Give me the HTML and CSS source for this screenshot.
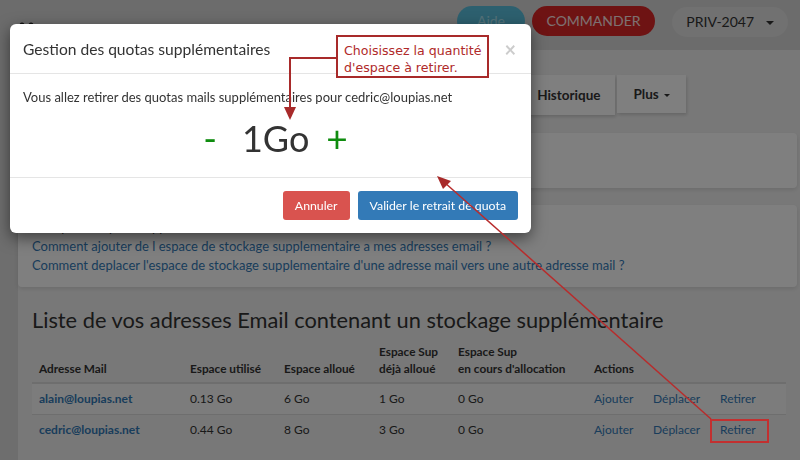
FILE: index.html
```html
<!DOCTYPE html>
<html lang="fr">
<head>
    <meta charset="UTF-8">
    <meta name="viewport" content="width=device-width, initial-scale=1.0">
    <title>Gestion des quotas supplémentaires</title>
    <link rel="stylesheet" href="styles.css">
</head>
<body>
    <header class="topbar">
        <svg class="logo" width="16" height="14" viewBox="0 0 16 14">
            <circle cx="3" cy="4" r="2.5" fill="#222"/>
            <circle cx="12" cy="4" r="2.5" fill="#222"/>
            <rect x="1" y="8" width="14" height="5" fill="#222"/>
        </svg>
        <div class="top-actions">
            <a class="pill pill-help" href="#">Aide</a>
            <a class="pill pill-order" href="#">COMMANDER</a>
            <a class="pill pill-account" href="#">PRIV-2047 <span class="caret"></span></a>
        </div>
    </header>

    <div class="layout">
        <aside class="side"></aside>
        <main class="content">
            <nav class="tabs">
                <a class="tab tab-active" href="#">Historique</a>
                <a class="tab" href="#">Plus <span class="caret small"></span></a>
            </nav>

            <section class="panel panel-info"></section>

            <section class="panel panel-help">
                <p class="help-title">Aide pour l'espace supplementaire :</p>
                <a href="#">Comment ajouter de l espace de stockage supplementaire a mes adresses email ?</a><br>
                <a href="#">Comment deplacer l'espace de stockage supplementaire d'une adresse mail vers une autre adresse mail ?</a>
            </section>

            <div class="list">
                <h2 class="list-title">Liste de vos adresses Email contenant un stockage supplémentaire</h2>
                <table class="quota-table">
                    <colgroup>
                        <col style="width:151px">
                        <col style="width:94px">
                        <col style="width:95px">
                        <col style="width:79px">
                        <col style="width:136px">
                        <col style="width:59px">
                        <col style="width:67px">
                        <col>
                    </colgroup>
                    <thead>
                        <tr>
                            <th>Adresse Mail</th>
                            <th>Espace utilisé</th>
                            <th>Espace alloué</th>
                            <th>Espace Sup<br>déjà alloué</th>
                            <th>Espace Sup<br>en cours d'allocation</th>
                            <th colspan="3">Actions</th>
                        </tr>
                    </thead>
                    <tbody>
                        <tr>
                            <td><a class="mail" href="#">alain@loupias.net</a></td>
                            <td>0.13 Go</td>
                            <td>6 Go</td>
                            <td>1 Go</td>
                            <td>0 Go</td>
                            <td><a href="#">Ajouter</a></td>
                            <td><a href="#">Déplacer</a></td>
                            <td><a href="#">Retirer</a></td>
                        </tr>
                        <tr>
                            <td><a class="mail" href="#">cedric@loupias.net</a></td>
                            <td>0.44 Go</td>
                            <td>8 Go</td>
                            <td>3 Go</td>
                            <td>0 Go</td>
                            <td><a href="#">Ajouter</a></td>
                            <td><a href="#">Déplacer</a></td>
                            <td><a href="#">Retirer</a></td>
                        </tr>
                    </tbody>
                </table>
            </div>
        </main>
    </div>

    <div class="backdrop"></div>

    <div class="modal">
        <div class="modal-header">
            <h4 class="modal-title">Gestion des quotas supplémentaires</h4>
            <span class="close">&times;</span>
        </div>
        <div class="modal-body">
            <p>Vous allez retirer des quotas mails supplémentaires pour cedric@loupias.net</p>
            <div class="qty-row">
                <a class="qty-btn minus" href="#">-</a>
                <span class="qty">1Go</span>
                <a class="qty-btn plus" href="#">+</a>
            </div>
        </div>
        <div class="modal-footer">
            <button class="btn btn-danger">Annuler</button>
            <button class="btn btn-primary">Valider le retrait de quota</button>
        </div>
    </div>

    <!-- annotations -->
    <div class="callout">Choisissez la quantité<br>d'espace à retirer.</div>
    <div class="mark"></div>
    <svg class="arrows" width="800" height="460" viewBox="0 0 800 460">
        <polyline points="336,58 290,58 290,110" fill="none" stroke="#a82a2a" stroke-width="2"/>
        <polygon points="284,107 296,107 290,120" fill="#a82a2a"/>
        <line x1="711" y1="419" x2="444" y2="182" stroke="#b82c2c" stroke-width="1.5"/>
        <polygon points="437,176 451,181 443,189" fill="#a82a2a"/>
    </svg>
</body>
</html>
```

FILE: styles.css
```css
body {
    margin: 0;
    font-family: Lato, "Open Sans", sans-serif;
    font-size: 13px;
    color: #333;
    background: #f1f1f1;
    width: 800px;
    height: 460px;
    overflow: hidden;
}
a {
    color: #337ab7;
    text-decoration: none;
}

/* top bar */
.topbar {
    height: 50px;
    background: #d8d8d8;
    display: flex;
    justify-content: space-between;
    padding: 6px 12px 0 19px;
    box-sizing: border-box;
}
.logo {
    margin-top: 15px;
}
.top-actions {
    display: flex;
    align-items: flex-start;
}
.pill {
    height: 30px;
    line-height: 30px;
    border-radius: 15px;
    font-size: 14px;
    text-align: center;
    box-sizing: border-box;
}
.pill-help {
    width: 68px;
    background: #5bc0de;
    color: #a8e4f4;
    margin-right: 7px;
}
.pill-order {
    width: 123px;
    background: #dc2626;
    color: #fbe3e3;
    margin-right: 17px;
}
.pill-account {
    width: 116px;
    margin-top: 1px;
    background: #e2e2e2;
    color: #333;
}
.caret {
    display: inline-block;
    width: 0;
    height: 0;
    margin-left: 8px;
    vertical-align: middle;
    border-top: 4px solid #333;
    border-left: 4px solid transparent;
    border-right: 4px solid transparent;
}
.caret.small {
    margin-left: 2px;
    border-top-width: 3px;
    border-left-width: 3px;
    border-right-width: 3px;
}

/* layout */
.layout {
    display: flex;
}
.side {
    width: 18px;
    min-height: 410px;
    background: #dcdcdc;
}
.content {
    flex: 1;
    margin-right: 3px;
}

.tabs {
    display: flex;
    justify-content: flex-end;
    gap: 2px;
    margin-top: 25px;
    padding-right: 111px;
    align-items: flex-start;
}
.tab {
    height: 38px;
    line-height: 38px;
    padding: 0 16px;
    background: #fff;
    color: #333;
    font-size: 13.5px;
    font-weight: bold;
    box-shadow: 1px 2px 3px rgba(0, 0, 0, 0.15);
}
.tab-active {
    height: 40px;
    line-height: 40px;
    padding: 0 15px 0 17px;
}

.panel {
    background: #fff;
    box-shadow: 0 2px 4px rgba(0, 0, 0, 0.1);
    border-radius: 4px;
}
.panel-info {
    margin-top: 18px;
    height: 55px;
}
.panel-help {
    margin-top: 17px;
    padding: 13px 14px 12px;
    line-height: 19px;
    font-size: 13px;
}
.help-title {
    margin: 0;
}

.list {
    padding: 0 11px 0 14px;
}
.list-title {
    font-size: 21.8px;
    font-weight: normal;
    line-height: 28px;
    margin: 19px 0 6px;
    color: #333;
}
.quota-table {
    width: 100%;
    border-collapse: collapse;
    table-layout: fixed;
    font-size: 12px;
}
.quota-table th {
    text-align: left;
    vertical-align: bottom;
    font-weight: bold;
    font-size: 11.8px;
    line-height: 17px;
    padding: 3px 7px 5px;
    border-bottom: 2px solid #ddd;
}
.quota-table td {
    line-height: 17px;
    padding: 6px 7px 7px;
    border-top: 1px solid #ddd;
}
.quota-table tbody tr:first-child td {
    border-top: 0;
}
.quota-table tbody tr:nth-child(odd) {
    background: #f8f8f8;
}
.mail {
    font-weight: bold;
}

/* modal */
.backdrop {
    position: fixed;
    inset: 0;
    background: rgba(0, 0, 0, 0.5);
}
.modal {
    position: absolute;
    left: 10px;
    top: 24px;
    width: 521px;
    background: #fff;
    border-radius: 6px;
    box-shadow: 0 5px 15px rgba(0, 0, 0, 0.5);
}
.modal-header {
    display: flex;
    justify-content: space-between;
    padding: 16px 13px 15px;
    border-bottom: 1px solid #e5e5e5;
}
.modal-title {
    margin: 0;
    font-size: 15.6px;
    font-weight: normal;
    line-height: 18px;
    color: #333;
}
.close {
    font-size: 20px;
    font-weight: bold;
    line-height: 18px;
    color: #ccc;
    margin-right: 2px;
}
.modal-body {
    padding: 13px 13px 18px;
    border-bottom: 1px solid #e5e5e5;
}
.modal-body p {
    margin: 0 0 10px;
    font-size: 13px;
    line-height: 20px;
}
.qty-row {
    display: flex;
    justify-content: center;
    align-items: center;
    height: 42px;
    padding-left: 10px;
}
.qty {
    font-size: 36px;
    color: #333;
    margin: 0 17px 0 25px;
}
.qty-btn {
    color: #0f8c0f;
    font-size: 37px;
    line-height: 42px;
}
.modal-footer {
    display: flex;
    justify-content: flex-end;
    gap: 8px;
    padding: 13px 13px 13px;
}
.btn {
    font-family: Lato, sans-serif;
    font-size: 12.3px;
    line-height: 17px;
    padding: 6px 12px;
    border: 0;
    border-radius: 3px;
    color: #fff;
}
.btn-danger {
    background: #d9534f;
}
.btn-primary {
    background: #337ab7;
}

/* annotations */
.callout {
    position: absolute;
    left: 336px;
    top: 35px;
    width: 143px;
    height: 34px;
    padding: 5px 0 0 6px;
    border: 2px solid #a82a2a;
    background: #fff;
    color: #b02a2a;
    font-family: "DejaVu Sans", sans-serif;
    font-size: 12.6px;
    line-height: 17px;
    white-space: nowrap;
}
.mark {
    position: absolute;
    left: 710px;
    top: 419px;
    width: 55px;
    height: 20px;
    border: 2px solid #c23030;
}
.arrows {
    position: absolute;
    left: 0;
    top: 0;
}
```
